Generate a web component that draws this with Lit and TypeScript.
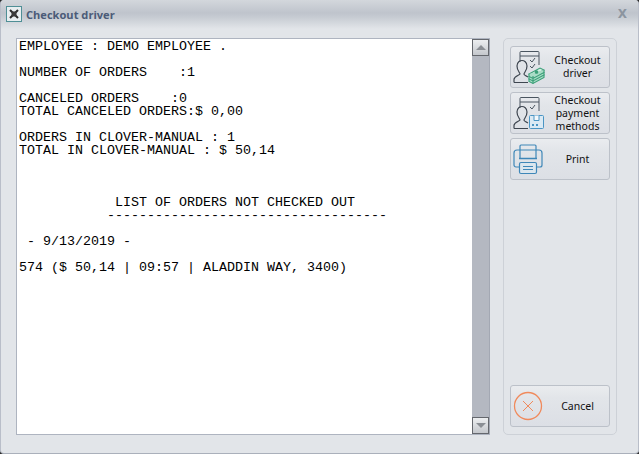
import { LitElement, html, css, svg } from "lit";
import { customElement } from "lit/decorators.js";

const report = `EMPLOYEE : DEMO EMPLOYEE .

NUMBER OF ORDERS    :1

CANCELED ORDERS    :0
TOTAL CANCELED ORDERS:$ 0,00

ORDERS IN CLOVER-MANUAL : 1
TOTAL IN CLOVER-MANUAL : $ 50,14



            LIST OF ORDERS NOT CHECKED OUT
           -----------------------------------

 - 9/13/2019 -

574 ($ 50,14 | 09:57 | ALADDIN WAY, 3400)`;

const person = svg`<path d="M2 33.500v-3c0-3 5-4 6-5.500 0-1.500-3-3-3-8 0-4 3-5.500 5-5.500s5 1.500 5 5.500c0 5-3 6.500-3 8 0 1 2 2 4 3M2 33.500h14" stroke="#3e4650" stroke-width="1.200"/>`;

const driverIcon = svg`<svg class="ico" viewBox="0 0 40 36" width="40" height="36" fill="none">
  <path d="M8 13V3.500a1 1 0 0 1 1-1h17a1 1 0 0 1 1 1V16M8 7h19" stroke="#4a5560" stroke-width="1"/>
  <path d="M18 11l2 2 3-4M18 17l2 2 3-4" stroke="#4a5560" stroke-width="1"/>
  ${person}
  <g stroke="#3b9f78" stroke-width="1.100" fill="#a9dcc6">
    <path d="M17 30v2.500l4 2 11-6V26z"/>
    <path d="M17 27.500V30l4 2 11-6v-2.500z"/>
    <path d="M17 25l11-6 4 2-11 6z" fill="#d4eee2"/>
    <path d="M17 25v2.500l4 2 11-6V21M21 27v7.500"/>
    <circle cx="24.500" cy="23" r="1.300" fill="#3b9f78"/>
  </g>
</svg>`;

const payIcon = svg`<svg class="ico" viewBox="0 0 40 36" width="40" height="36" fill="none">
  <path d="M8 13V3.500a1 1 0 0 1 1-1h17a1 1 0 0 1 1 1V16M8 7h19" stroke="#4a5560" stroke-width="1"/>
  <path d="M18 12l2 2 3-4" stroke="#4a5560" stroke-width="1"/>
  ${person}
  <rect x="17.500" y="20.500" width="14" height="13" rx="1" fill="#dbeaf4" stroke="#4b95c4"/>
  <path d="M22 20.500v5h5v-5" fill="#f4f8fb" stroke="#4b95c4"/>
  <path d="M20 29h2v2h-2zM24 29h2v2h-2z" fill="#4b95c4"/>
</svg>`;

const printIcon = svg`<svg class="ico" viewBox="0 0 40 36" width="40" height="36" fill="none" stroke="#3f87b8" stroke-width="1.200">
  <path d="M8 17V5a1 1 0 0 1 1-1h14a1 1 0 0 1 1 1V17"/>
  <path d="M7 26H4a2 2 0 0 1-2-2V12a3 3 0 0 1 3-3h22a3 3 0 0 1 3 3v12a2 2 0 0 1-2 2h-3"/>
  <path d="M7 17.500h18" stroke-width="1.300"/>
  <rect x="7.500" y="21.500" width="17" height="11" rx="1.500" fill="#dbe6ee"/>
  <path d="M11 25.500h10M11 28.500h10" stroke-width="1"/>
</svg>`;

const cancelIcon = svg`<svg class="ico" viewBox="0 0 40 36" width="40" height="36" fill="none" stroke="#f08a5c">
  <circle cx="16" cy="18" r="13.500" stroke-width="1.300"/>
  <path d="M11 13l10 10M21 13L11 23" stroke-width="1"/>
</svg>`;

const appIcon = svg`<svg viewBox="0 0 16 16" width="16" height="16">
  <rect x="0.500" y="0.500" width="15" height="15" fill="#e8eef0" stroke="#4f8f96"/>
  <path d="M4 4l8 8M12 4l-8 8" stroke="#2a2a2a" stroke-width="2"/>
  <rect x="5.500" y="5.500" width="5" height="5" fill="#3a3a3a"/>
</svg>`;

@customElement("app-root")
export class AppRoot extends LitElement {
  static styles = css`
    :host {
      display: block;
      width: 639px;
      height: 454px;
      background: #2a2a2a;
      overflow: hidden;
      font-family: "Noto Sans", "Liberation Sans", sans-serif;
    }
    .win {
      box-sizing: border-box;
      height: 454px;
      display: flex;
      flex-direction: column;
      border-radius: 4px;
      border-left: 1px solid #b9bec9;
      border-right: 1px solid #b9bec9;
      border-bottom: 1px solid #aab0bb;
      background: #e2e5e9;
      overflow: hidden;
    }
    .title {
      height: 29px;
      flex: none;
      display: flex;
      align-items: center;
      gap: 4px;
      padding: 0 0 1px 5px;
      box-sizing: border-box;
      background: linear-gradient(#d3d7dc 0, #bfc4cc 13px, #c6cbd2 17px, #e2e5e9 29px);
      color: #4b5b78;
      font-family: "Open Sans", sans-serif;
      font-size: 11.100px;
      font-weight: 700;
    }
    .title svg { display: block; }
    .title span { flex: 1; }
    .close {
      color: #8b949f;
      font-family: "DejaVu Sans", sans-serif;
      font-size: 12px;
      font-weight: 700;
      line-height: 14px;
      margin-right: 11px;
    }
    .body {
      flex: 1;
      display: flex;
      padding: 9px 21px 18px 15px;
      gap: 13px;
      min-height: 0;
    }
    .doc {
      flex: none;
      width: 474px;
      box-sizing: border-box;
      display: flex;
      background: #fff;
      border: 1px solid #aeb4c0;
      border-right: none;
    }
    pre {
      flex: 1;
      margin: 0;
      padding: 1px 0 0 2px;
      font-family: "Liberation Mono", monospace;
      font-size: 13.330px;
      line-height: 13px;
      color: #000;
    }
    .bar {
      flex: none;
      width: 17px;
      background: #b4b8c1;
      display: flex;
      flex-direction: column;
      justify-content: space-between;
      border-right: 1px solid #a3a8b3;
    }
    .arrow {
      height: 17px;
      box-sizing: border-box;
      border: 1px solid #64676d;
      background: linear-gradient(#eceef0, #c4c7cc);
      display: flex;
      align-items: center;
      justify-content: center;
    }
    .arrow i {
      width: 0;
      height: 0;
      border-left: 5px solid transparent;
      border-right: 5px solid transparent;
    }
    .up i { border-bottom: 5px solid #8a8e94; }
    .down i { border-top: 5px solid #8a8e94; }
    .side {
      flex: none;
      width: 114px;
      box-sizing: border-box;
      border: 1px solid #cdd1d7;
      border-radius: 5px;
      padding: 7px 6px 7px 6px;
      display: flex;
      flex-direction: column;
      gap: 4px;
    }
    .spacer { flex: 1; }
    .btn {
      box-sizing: border-box;
      height: 42px;
      flex: none;
      border: 1px solid #bcc1c9;
      border-radius: 3px;
      background: linear-gradient(#eaecef 0, #e2e5e9 30%, #dcdfe5 100%);
      display: flex;
      align-items: center;
      color: #111;
      font-size: 10.500px;
      line-height: 13px;
    }
    .ico { flex: none; display: block; margin-left: 1px; }
    .label { flex: 1; text-align: center; padding-right: 6px; }
  `;

  render() {
    return html`<div class="win">
      <div class="title">${appIcon}<span>Checkout driver</span><div class="close">X</div></div>
      <div class="body">
        <div class="doc">
          <pre>${report}</pre>
          <div class="bar">
            <div class="arrow up"><i></i></div>
            <div class="arrow down"><i></i></div>
          </div>
        </div>
        <div class="side">
          <div class="btn">${driverIcon}<div class="label">Checkout<br />driver</div></div>
          <div class="btn">${payIcon}<div class="label">Checkout<br />payment<br />methods</div></div>
          <div class="btn">${printIcon}<div class="label">Print</div></div>
          <div class="spacer"></div>
          <div class="btn">${cancelIcon}<div class="label">Cancel</div></div>
        </div>
      </div>
    </div>`;
  }
}
